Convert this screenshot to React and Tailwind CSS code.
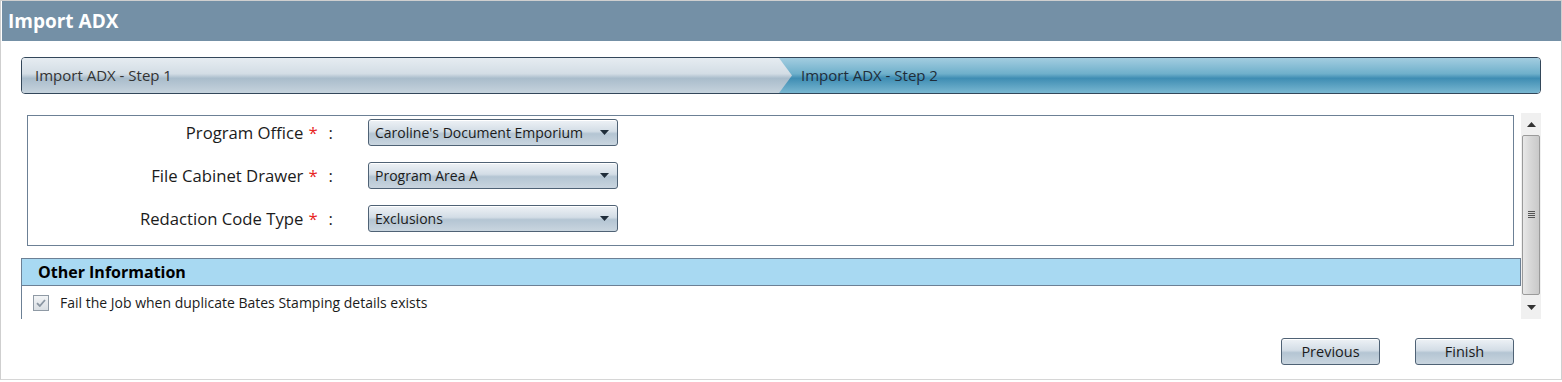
import React from 'react';

const font = { fontFamily: '"Open Sans", "Noto Sans", sans-serif' };

function Dropdown({ value }) {
  return (
    <div className="flex h-[27px] w-[250px] items-center justify-between rounded-[3px] border border-[#4f6275] bg-[linear-gradient(#eef2f6_0%,#d3dde6_45%,#b4c5d3_55%,#c9d5df_100%)] pl-[6px] pr-[8px] shadow-[inset_0_1px_0_#ffffff]">
      <span className="text-[14px] leading-none text-[#1b1b1b]">{value}</span>
      <svg width="9" height="5" viewBox="0 0 9 5">
        <path d="M0 0h9L4.5 5z" fill="#1f2d3a" />
      </svg>
    </div>
  );
}

function Field({ label, value }) {
  return (
    <div className="flex h-[43px] items-start pt-[3px]">
      <div className="flex h-[27px] w-[340px] items-center justify-end pr-[35px] text-[16.7px] text-[#1b1b1b]">
        {label}
        <span className="ml-[5px] text-[#e81e1e]">*</span>
        <span className="ml-[11px]">:</span>
      </div>
      <Dropdown value={value} />
    </div>
  );
}

function GradButton({ children }) {
  return (
    <button className="h-[27px] w-[99px] rounded-[3px] border border-[#4f6275] bg-[linear-gradient(#eef2f6_0%,#d3dde6_45%,#b4c5d3_55%,#c9d5df_100%)] text-[14.5px] text-[#1b1b1b] shadow-[inset_0_1px_0_#ffffff]">
      {children}
    </button>
  );
}

export default function App() {
  return (
    <div className="h-[382px] w-[1562px] bg-white" style={font}>
      <div className="flex h-[380px] flex-col border border-[#cfcfcf] border-b-[#d6d6d6]">
        {/* title */}
        <div className="ml-[1px] flex h-[40px] items-center bg-[#7490a6] px-[6px]">
          <h1 className="text-[19px] font-bold text-white">Import ADX</h1>
        </div>

        <div className="flex flex-1 flex-col pl-[20px] pr-[20px] pt-[16px]">
          {/* steps */}
          <div className="flex h-[37px] overflow-hidden rounded-[4px] border border-[#33475a]">
            <div className="relative z-10 -mr-[13px] flex w-[770px] items-center bg-[linear-gradient(#e6ecf1_0%,#d3dde5_45%,#a9bccb_58%,#c6d3dd_100%)] pl-[13px] text-[15px] text-[#333] [clip-path:polygon(0_0,757px_0,770px_50%,757px_100%,0_100%)]">
              Import ADX - Step 1
            </div>
            <div className="flex flex-1 items-center bg-[linear-gradient(#a3cde0_0%,#6fb0cb_45%,#3f8db3_58%,#79b7d1_100%)] pl-[22px] text-[15px] text-[#1f2d3a]">
              Import ADX - Step 2
            </div>
          </div>

          {/* content area with scrollbar */}
          <div className="mt-[19px] flex h-[206px]">
            <div className="flex flex-1 flex-col">
              <div className="ml-[6px] mr-[7px] mt-[2px] h-[132px] border border-[#6c8095]">
                <Field label="Program Office" value="Caroline's Document Emporium" />
                <Field label="File Cabinet Drawer" value="Program Area A" />
                <Field label="Redaction Code Type" value="Exclusions" />
              </div>
              <div className="mt-[12px] flex h-[28px] items-center border border-[#6c8095] bg-[#a8d9f2] pl-[16px] text-[16px] font-bold text-black">
                Other Information
              </div>
              <div className="flex h-[33px] items-center gap-[11px] border-l border-[#6c8095] pl-[11px]">
                <div className="flex h-[16px] w-[16px] items-center justify-center border border-[#8f9aa5] bg-[linear-gradient(#f2f4f6,#d9dee3)]">
                  <svg width="10" height="8" viewBox="0 0 10 8">
                    <path d="M1 4.2 3.8 7 9 1" stroke="#8a96a2" strokeWidth="1.8" fill="none" />
                  </svg>
                </div>
                <span className="text-[14px] text-[#1b1b1b]">Fail the Job when duplicate Bates Stamping details exists</span>
              </div>
            </div>

            {/* scrollbar */}
            <div className="flex w-[20px] flex-col items-center bg-[#f0f0f0]">
              <div className="flex h-[22px] items-center">
                <svg width="9" height="5" viewBox="0 0 9 5">
                  <path d="M0 5h9L4.5 0z" fill="#333" />
                </svg>
              </div>
              <div className="flex h-[160px] w-[18px] items-center justify-center rounded-[2px] border border-[#9a9a9a] bg-[linear-gradient(90deg,#e8e8e8,#d6d6d6_50%,#c9c9c9)]">
                <svg width="7" height="8" viewBox="0 0 7 8">
                  <path d="M0 0.5h7M0 2.5h7M0 4.5h7M0 6.5h7" stroke="#555" strokeWidth="1" />
                </svg>
              </div>
              <div className="flex flex-1 items-center">
                <svg width="9" height="5" viewBox="0 0 9 5">
                  <path d="M0 0h9L4.5 5z" fill="#333" />
                </svg>
              </div>
            </div>
          </div>

          {/* buttons */}
          <div className="mt-[19px] flex justify-end gap-[35px] pr-[27px]">
            <GradButton>Previous</GradButton>
            <GradButton>Finish</GradButton>
          </div>
        </div>
      </div>
    </div>
  );
}
